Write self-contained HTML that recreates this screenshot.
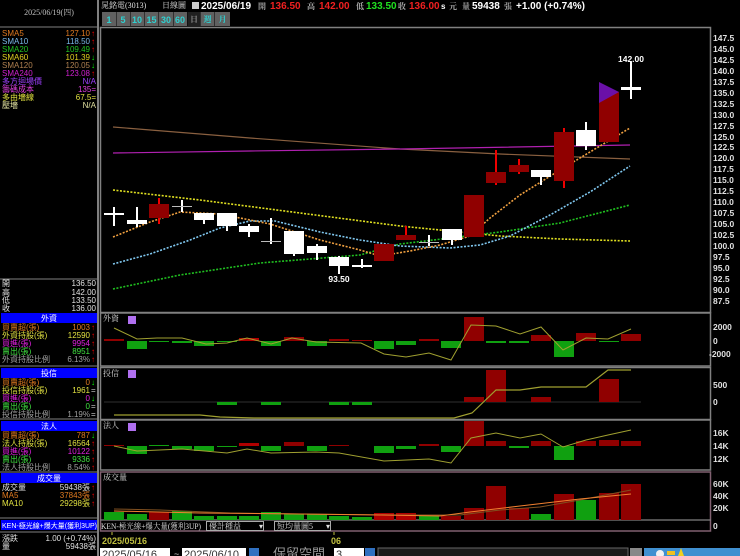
<!DOCTYPE html>
<html><head><meta charset="utf-8">
<style>
html,body{margin:0;padding:0;background:#000;width:740px;height:556px;overflow:hidden}
svg{display:block}
text{font-family:"Liberation Sans","Noto Sans CJK TC",sans-serif}
.s{font-family:"Liberation Serif","Noto Serif CJK SC",serif;font-size:8px}
.ax{font-size:8.5px;fill:#e0e0e0;font-weight:bold}
</style></head><body>
<svg width="740" height="556" viewBox="0 0 740 556" xmlns="http://www.w3.org/2000/svg">
<rect width="740" height="556" fill="#000"/>
<!-- left panel -->
<line x1="98" y1="0" x2="98" y2="556" stroke="#808080" stroke-width="2"/>
<text x="49" y="15" class="s" fill="#c0c0c0" text-anchor="middle">2025/06/19(四)</text>
<line x1="0" y1="27" x2="97" y2="27" stroke="#808080"/>
<g class="s">
<text x="2" y="36" fill="#e07a20">SMA5</text><text x="90" y="36" fill="#e07a20" text-anchor="end">127.10</text><text x="91" y="36" fill="#f00">↑</text>
<text x="2" y="44" fill="#7ab8e8">SMA10</text><text x="90" y="44" fill="#7ab8e8" text-anchor="end">118.50</text><text x="91" y="44" fill="#f00">↑</text>
<text x="2" y="52" fill="#20c020">SMA20</text><text x="90" y="52" fill="#20c020" text-anchor="end">109.49</text><text x="91" y="52" fill="#f00">↑</text>
<text x="2" y="60" fill="#e0d020">SMA60</text><text x="90" y="60" fill="#e0d020" text-anchor="end">101.39</text><text x="91" y="60" fill="#0f0">↓</text>
<text x="2" y="68" fill="#b08050">SMA120</text><text x="90" y="68" fill="#b08050" text-anchor="end">120.05</text><text x="91" y="68" fill="#0f0">↓</text>
<text x="2" y="76" fill="#d020d0">SMA240</text><text x="90" y="76" fill="#d020d0" text-anchor="end">123.08</text><text x="91" y="76" fill="#f00">↑</text>
<text x="2" y="84" fill="#a040ff">多方迴場價</text><text x="96" y="84" fill="#a040ff" text-anchor="end">N/A</text>
<text x="2" y="92" fill="#e040e0">籌碼成本</text><text x="96" y="92" fill="#e040e0" text-anchor="end">135=</text>
<text x="2" y="100" fill="#e0e040">多由墻線</text><text x="96" y="100" fill="#e0e040" text-anchor="end">67.5=</text>
<text x="2" y="108" fill="#e0e0a0">壓墻</text><text x="96" y="108" fill="#e0e0a0" text-anchor="end">N/A</text>
</g>
<line x1="0" y1="279" x2="97" y2="279" stroke="#808080"/>
<g class="s" fill="#e0e0e0">
<text x="2" y="286">開</text><text x="96" y="286" text-anchor="end">136.50</text>
<text x="2" y="295">高</text><text x="96" y="295" text-anchor="end">142.00</text>
<text x="2" y="303">低</text><text x="96" y="303" text-anchor="end">133.50</text>
<text x="2" y="311">收</text><text x="96" y="311" text-anchor="end">136.00</text>
</g>
<g class="s">
<rect x="1" y="313" width="96" height="10" fill="#0000ff"/><text x="49" y="321" fill="#fff" text-anchor="middle">外資</text>
<text x="2" y="330" fill="#e07a20">買賣超(張)</text><text x="90" y="330" fill="#e07a20" text-anchor="end">1003</text><text x="91" y="330" fill="#f00">↑</text>
<text x="2" y="338" fill="#e0e040">外資持股(張)</text><text x="90" y="338" fill="#e0e040" text-anchor="end">12590</text><text x="91" y="338" fill="#f00">↑</text>
<text x="2" y="346" fill="#e020e0">買進(張)</text><text x="90" y="346" fill="#e020e0" text-anchor="end">9954</text><text x="91" y="346" fill="#f00">↑</text>
<text x="2" y="354" fill="#40e040">賣出(張)</text><text x="90" y="354" fill="#40e040" text-anchor="end">8951</text><text x="91" y="354" fill="#f00">↑</text>
<text x="2" y="362" fill="#a0a0a0">外資持股比例</text><text x="90" y="362" fill="#a0a0a0" text-anchor="end">6.13%</text><text x="91" y="362" fill="#f00">↑</text>
<line x1="0" y1="366" x2="97" y2="366" stroke="#808080"/>
<rect x="1" y="368" width="96" height="10" fill="#0000ff"/><text x="49" y="376" fill="#fff" text-anchor="middle">投信</text>
<text x="2" y="385" fill="#e07a20">買賣超(張)</text><text x="90" y="385" fill="#e07a20" text-anchor="end">0</text><text x="91" y="385" fill="#0f0">↓</text>
<text x="2" y="393" fill="#e0e040">投信持股(張)</text><text x="90" y="393" fill="#e0e040" text-anchor="end">1961</text><text x="91" y="393" fill="#ccc">=</text>
<text x="2" y="401" fill="#e020e0">買進(張)</text><text x="90" y="401" fill="#e020e0" text-anchor="end">0</text><text x="91" y="401" fill="#0f0">↓</text>
<text x="2" y="409" fill="#40e040">賣出(張)</text><text x="90" y="409" fill="#40e040" text-anchor="end">0</text><text x="91" y="409" fill="#ccc">=</text>
<text x="2" y="417" fill="#a0a0a0">投信持股比例</text><text x="90" y="417" fill="#a0a0a0" text-anchor="end">1.19%</text><text x="91" y="417" fill="#ccc">=</text>
<line x1="0" y1="419" x2="97" y2="419" stroke="#808080"/>
<rect x="1" y="421" width="96" height="10" fill="#0000ff"/><text x="49" y="429" fill="#fff" text-anchor="middle">法人</text>
<text x="2" y="438" fill="#e07a20">買賣超(張)</text><text x="90" y="438" fill="#e07a20" text-anchor="end">787</text><text x="91" y="438" fill="#0f0">↓</text>
<text x="2" y="446" fill="#e0e040">法人持股(張)</text><text x="90" y="446" fill="#e0e040" text-anchor="end">16564</text><text x="91" y="446" fill="#f00">↑</text>
<text x="2" y="454" fill="#e020e0">買進(張)</text><text x="90" y="454" fill="#e020e0" text-anchor="end">10122</text><text x="91" y="454" fill="#f00">↑</text>
<text x="2" y="462" fill="#40e040">賣出(張)</text><text x="90" y="462" fill="#40e040" text-anchor="end">9336</text><text x="91" y="462" fill="#f00">↑</text>
<text x="2" y="470" fill="#a0a0a0">法人持股比例</text><text x="90" y="470" fill="#a0a0a0" text-anchor="end">8.54%</text><text x="91" y="470" fill="#f00">↑</text>
<line x1="0" y1="472" x2="97" y2="472" stroke="#808080"/>
<rect x="1" y="473" width="96" height="10" fill="#0000ff"/><text x="49" y="481" fill="#fff" text-anchor="middle">成交量</text>
<text x="2" y="490" fill="#e0e0e0">成交量</text><text x="90" y="490" fill="#e0e0e0" text-anchor="end">59438張</text><text x="91" y="490" fill="#f00">↑</text>
<text x="2" y="498" fill="#e07a20">MA5</text><text x="90" y="498" fill="#e07a20" text-anchor="end">37843張</text><text x="91" y="498" fill="#f00">↑</text>
<text x="2" y="506" fill="#e0e040">MA10</text><text x="90" y="506" fill="#e0e040" text-anchor="end">29298張</text><text x="91" y="506" fill="#f00">↑</text>
<line x1="0" y1="518" x2="97" y2="518" stroke="#808080"/>
<rect x="1" y="520" width="96" height="10" fill="#0000ff"/><text x="2" y="528" fill="#fff" font-size="7" textLength="95" lengthAdjust="spacingAndGlyphs">KEN-極光線+爆大量(獲利3UP)</text>
<line x1="0" y1="532" x2="97" y2="532" stroke="#808080"/>
<text x="2" y="541" fill="#e0e0e0">漲跌</text><text x="96" y="541" fill="#e0e0e0" text-anchor="end">1.00 (+0.74%)</text>
<text x="2" y="549" fill="#e0e0e0">量</text><text x="96" y="549" fill="#e0e0e0" text-anchor="end">59438張</text>
</g>

<!-- header -->
<text x="101" y="8" class="s" fill="#e0e0e0">晁銘電(3013)</text>
<text x="162" y="8" class="s" fill="#e0e0e0">日線圖</text>
<rect x="192" y="2" width="7" height="7" fill="#ccc"/>
<g font-size="10" font-weight="bold">
<text x="201" y="9" fill="#fff">2025/06/19</text>
<text x="258" y="9" class="s" fill="#aaa">開</text><text x="270" y="9" fill="#f02020">136.50</text>
<text x="307" y="9" class="s" fill="#aaa">高</text><text x="319" y="9" fill="#f02020">142.00</text>
<text x="356" y="9" class="s" fill="#aaa">低</text><text x="366" y="9" fill="#20e020">133.50</text>
<text x="398" y="9" class="s" fill="#aaa">收</text><text x="409" y="9" fill="#f02020">136.00</text>
<text x="441" y="9" fill="#fff" font-size="8">s</text><text x="449" y="9" class="s" fill="#aaa">元</text>
<text x="462" y="9" class="s" fill="#aaa">量</text><text x="472" y="9" fill="#fff">59438</text><text x="504" y="9" class="s" fill="#aaa">張</text>
<text x="516" y="9" fill="#fff">+1.00 (+0.74%)</text>
</g>
<g font-size="9" font-weight="bold" fill="#30d0d0">
<rect x="102" y="12" width="14" height="14" fill="#606060"/><text x="109" y="23" text-anchor="middle">1</text>
<rect x="116.5" y="12" width="13.5" height="14" fill="#606060"/><text x="123" y="23" text-anchor="middle">5</text>
<rect x="130.5" y="12" width="13.5" height="14" fill="#606060"/><text x="137" y="23" text-anchor="middle">10</text>
<rect x="144.5" y="12" width="14" height="14" fill="#606060"/><text x="151.5" y="23" text-anchor="middle">15</text>
<rect x="159" y="12" width="14" height="14" fill="#606060"/><text x="166" y="23" text-anchor="middle">30</text>
<rect x="173.5" y="12" width="13.5" height="14" fill="#606060"/><text x="180" y="23" text-anchor="middle">60</text>
<rect x="187.5" y="12" width="12.5" height="14" fill="#202020"/><text x="194" y="22" text-anchor="middle" class="s" fill="#888">日</text>
<rect x="200.5" y="12" width="14" height="14" fill="#606060"/><text x="207.5" y="22" text-anchor="middle" class="s">週</text>
<rect x="215" y="12" width="15" height="14" fill="#606060"/><text x="222.5" y="22" text-anchor="middle" class="s">月</text>
</g>

<!-- panel borders -->
<g fill="none" stroke="#808080" stroke-width="1.5">
<rect x="100.5" y="27.5" width="610" height="285"/>
<rect x="100.5" y="313" width="610" height="53"/>
<rect x="100.5" y="367.5" width="610" height="52"/>
<rect x="100.5" y="420" width="610" height="50"/>
</g>
<rect x="100.5" y="472" width="610" height="59" fill="none" stroke="#806070" stroke-width="1.5"/>
<line x1="100" y1="520" x2="711" y2="520" stroke="#808080" stroke-width="1.2"/>

<!-- price axis -->
<g class="ax">
<text x="713" y="41">147.5</text><text x="713" y="52">145.0</text><text x="713" y="63">142.5</text><text x="713" y="74">140.0</text>
<text x="713" y="85">137.5</text><text x="713" y="96">135.0</text><text x="713" y="107">132.5</text><text x="713" y="118">130.0</text>
<text x="713" y="129">127.5</text><text x="713" y="140">125.0</text><text x="713" y="150">122.5</text><text x="713" y="161">120.0</text>
<text x="713" y="172">117.5</text><text x="713" y="183">115.0</text><text x="713" y="194">112.5</text><text x="713" y="205">110.0</text>
<text x="713" y="216">107.5</text><text x="713" y="227">105.0</text><text x="713" y="238">102.5</text><text x="713" y="249">100.0</text>
<text x="713" y="260">97.5</text><text x="713" y="271">95.0</text><text x="713" y="282">92.5</text><text x="713" y="293">90.0</text>
<text x="713" y="304">87.5</text>
<text x="713" y="330">2000</text><text x="713" y="344">0</text><text x="709" y="357">-2000</text>
<text x="713" y="388">500</text><text x="713" y="405">0</text>
<text x="713" y="436">16K</text><text x="713" y="449">14K</text><text x="713" y="462">12K</text>
<text x="713" y="487">60K</text><text x="713" y="499">40K</text><text x="713" y="511">20K</text><text x="713" y="529">0</text>
</g>

<!-- MAs -->
<polyline points="113,127 250,138 400,149 500,154 630,159" fill="none" stroke="#8a6040" stroke-width="1.2"/>
<polyline points="113,153 250,151 400,149 630,145" fill="none" stroke="#b020b0" stroke-width="1.2"/>
<polyline points="113,190 200,200 300,213 400,226 500,236 560,239 630,241" fill="none" stroke="#e0e020" stroke-width="1.6" stroke-dasharray="2,1.5"/>
<polyline points="113,289 180,275 260,263 360,255 400,244 450,238 500,232 560,223 630,205" fill="none" stroke="#20c020" stroke-width="1.6" stroke-dasharray="2,1.5"/>
<polyline points="113,264 150,254 190,240 220,228 250,221 275,221 320,232 360,240 400,246 450,248 480,245 510,236 550,215 590,192 630,166" fill="none" stroke="#80c8f0" stroke-width="1.6" stroke-dasharray="2,1.5"/>
<polyline points="113,237 150,222 180,212 220,214 270,224 320,240 360,250 380,256 410,251 440,245 470,236 490,218 520,195 560,170 600,146 630,128" fill="none" stroke="#f0a040" stroke-width="1.6" stroke-dasharray="2,1.5"/>

<!-- candles -->
<g stroke-width="2">
<line x1="114" y1="207" x2="114" y2="226" stroke="#fff"/><rect x="104" y="213" width="20" height="2" fill="#fff"/>
<line x1="137" y1="207" x2="137" y2="227" stroke="#fff"/><rect x="127" y="220" width="20" height="4" fill="#fff"/>
<line x1="159" y1="198" x2="159" y2="224" stroke="#f00000"/><rect x="149" y="204" width="20" height="14" fill="#900000"/>
<line x1="182" y1="200" x2="182" y2="212" stroke="#fff"/><rect x="172" y="206" width="20" height="1" fill="#bbb"/>
<line x1="204" y1="213" x2="204" y2="224" stroke="#fff"/><rect x="194" y="213" width="20" height="7" fill="#fff"/>
<line x1="227" y1="213" x2="227" y2="231" stroke="#fff"/><rect x="217" y="213" width="20" height="13" fill="#fff"/>
<line x1="249" y1="224" x2="249" y2="237" stroke="#fff"/><rect x="239" y="226" width="20" height="6" fill="#fff"/>
<line x1="271" y1="218" x2="271" y2="244" stroke="#fff"/><rect x="261" y="241" width="20" height="1" fill="#bbb"/>
<line x1="294" y1="231" x2="294" y2="256" stroke="#fff"/><rect x="284" y="231" width="20" height="23" fill="#fff"/>
<line x1="317" y1="244" x2="317" y2="260" stroke="#fff"/><rect x="307" y="246" width="20" height="7" fill="#fff"/>
<line x1="339" y1="256" x2="339" y2="274" stroke="#fff"/><rect x="329" y="257" width="20" height="9" fill="#fff"/>
<line x1="362" y1="259" x2="362" y2="268" stroke="#fff"/><rect x="352" y="265" width="20" height="2" fill="#fff"/>
<rect x="374" y="244" width="20" height="17" fill="#900000"/>
<line x1="406" y1="226" x2="406" y2="240" stroke="#f00000"/><rect x="396" y="235" width="20" height="5" fill="#900000"/>
<line x1="429" y1="235" x2="429" y2="246" stroke="#fff"/><rect x="419" y="242" width="20" height="1" fill="#bbb"/>
<line x1="452" y1="229" x2="452" y2="245" stroke="#fff"/><rect x="442" y="229" width="20" height="11" fill="#fff"/>
<rect x="464" y="195" width="20" height="42" fill="#900000"/>
<line x1="496" y1="150" x2="496" y2="185" stroke="#f00000"/><rect x="486" y="172" width="20" height="11" fill="#900000"/>
<line x1="519" y1="159" x2="519" y2="174" stroke="#f00000"/><rect x="509" y="165" width="20" height="7" fill="#900000"/>
<line x1="541" y1="170" x2="541" y2="185" stroke="#fff"/><rect x="531" y="170" width="20" height="7" fill="#fff"/>
<line x1="564" y1="128" x2="564" y2="188" stroke="#f00000"/><rect x="554" y="132" width="20" height="49" fill="#900000"/>
<line x1="586" y1="122" x2="586" y2="150" stroke="#fff"/><rect x="576" y="130" width="20" height="16" fill="#fff"/>
<rect x="599" y="92" width="20" height="50" fill="#900000"/>
<polygon points="599,82 619,92 599,103" fill="#6a10a8"/>
<line x1="631" y1="62" x2="631" y2="99" stroke="#fff"/><rect x="621" y="87" width="20" height="3" fill="#fff"/>
</g>
<text x="631" y="62" text-anchor="middle" font-size="8.5" fill="#fff" font-weight="bold">142.00</text>
<text x="339" y="282" text-anchor="middle" font-size="8.5" fill="#fff" font-weight="bold">93.50</text>

<!-- 外資 panel -->
<text x="103" y="321" class="s" fill="#ddd">外資</text>
<rect x="128" y="316" width="8" height="8" fill="#b070f0"/>
<g>
<rect x="104" y="339" width="20" height="2" fill="#900000"/>
<rect x="127" y="341" width="20" height="8" fill="#10a010"/>
<rect x="149" y="341" width="20" height="1" fill="#10a010"/>
<rect x="172" y="341" width="20" height="2" fill="#10a010"/>
<rect x="194" y="341" width="20" height="5" fill="#10a010"/>
<rect x="217" y="341" width="20" height="1" fill="#10a010"/>
<rect x="239" y="338" width="20" height="3" fill="#b00000"/>
<rect x="261" y="341" width="20" height="5" fill="#10a010"/>
<rect x="284" y="337" width="20" height="4" fill="#900000"/>
<rect x="307" y="341" width="20" height="5" fill="#10a010"/>
<rect x="329" y="339" width="20" height="2" fill="#900000"/>
<rect x="352" y="340" width="20" height="1" fill="#900000"/>
<rect x="374" y="341" width="20" height="8" fill="#10a010"/>
<rect x="396" y="341" width="20" height="4" fill="#10a010"/>
<rect x="419" y="339" width="20" height="2" fill="#900000"/>
<rect x="441" y="341" width="20" height="7" fill="#10a010"/>
<rect x="464" y="317" width="20" height="24" fill="#900000"/>
<rect x="486" y="341" width="20" height="2" fill="#10a010"/>
<rect x="509" y="341" width="20" height="2" fill="#10a010"/>
<rect x="531" y="335" width="20" height="6" fill="#900000"/>
<rect x="554" y="341" width="20" height="16" fill="#10a010"/>
<rect x="576" y="333" width="20" height="8" fill="#900000"/>
<rect x="599" y="341" width="20" height="1" fill="#10a010"/>
<rect x="621" y="334" width="20" height="7" fill="#900000"/>
</g>
<polyline points="114,328 137,339 157,338 182,338 206,344 227,343 247,338 271,344 292,338 316,342 361,343 384,354 406,357 429,353 451,360 471,325 496,326 520,334 541,327 563,350 586,338 608,339 631,329" fill="none" stroke="#a0a030" stroke-width="1"/>

<!-- 投信 panel -->
<text x="103" y="376" class="s" fill="#ddd">投信</text>
<rect x="128" y="370" width="8" height="8" fill="#b070f0"/>
<line x1="104" y1="402" x2="641" y2="402" stroke="#303030"/>
<g>
<rect x="217" y="402" width="20" height="3" fill="#10a010"/>
<rect x="261" y="402" width="20" height="3" fill="#10a010"/>
<rect x="329" y="402" width="20" height="3" fill="#10a010"/>
<rect x="352" y="402" width="20" height="3" fill="#10a010"/>
<rect x="464" y="397" width="20" height="5" fill="#900000"/>
<rect x="486" y="370" width="20" height="32" fill="#900000"/>
<rect x="531" y="397" width="20" height="5" fill="#900000"/>
<rect x="599" y="379" width="20" height="23" fill="#900000"/>
</g>
<polyline points="114,415 200,415 220,417 254,418 454,418 472,413 496,390 520,390 541,387 586,387 608,370 631,370" fill="none" stroke="#a0a030" stroke-width="1.2"/>

<!-- 法人 panel -->
<text x="103" y="428" class="s" fill="#ddd">法人</text>
<rect x="128" y="423" width="8" height="8" fill="#b070f0"/>
<g>
<rect x="104" y="445" width="20" height="1" fill="#900000"/>
<rect x="127" y="446" width="20" height="8" fill="#10a010"/>
<rect x="149" y="445" width="20" height="1" fill="#10a010"/>
<rect x="172" y="446" width="20" height="3" fill="#10a010"/>
<rect x="194" y="446" width="20" height="5" fill="#10a010"/>
<rect x="217" y="446" width="20" height="1" fill="#10a010"/>
<rect x="239" y="443" width="20" height="3" fill="#b00000"/>
<rect x="261" y="446" width="20" height="5" fill="#10a010"/>
<rect x="284" y="442" width="20" height="4" fill="#900000"/>
<rect x="307" y="446" width="20" height="5" fill="#10a010"/>
<rect x="329" y="445" width="20" height="1" fill="#900000"/>
<rect x="374" y="446" width="20" height="7" fill="#10a010"/>
<rect x="396" y="446" width="20" height="3" fill="#10a010"/>
<rect x="419" y="444" width="20" height="2" fill="#900000"/>
<rect x="441" y="446" width="20" height="6" fill="#10a010"/>
<rect x="464" y="421" width="20" height="25" fill="#900000"/>
<rect x="486" y="441" width="20" height="5" fill="#900000"/>
<rect x="509" y="446" width="20" height="2" fill="#10a010"/>
<rect x="531" y="441" width="20" height="5" fill="#900000"/>
<rect x="554" y="446" width="20" height="14" fill="#10a010"/>
<rect x="576" y="441" width="20" height="5" fill="#900000"/>
<rect x="599" y="440" width="20" height="6" fill="#900000"/>
<rect x="621" y="441" width="20" height="5" fill="#900000"/>
</g>
<polyline points="114,446 137,451 182,449 227,453 247,449 271,453 316,452 339,453 384,461 429,459 451,463 471,438 496,433 520,438 541,434 563,447 586,440 608,435 631,430" fill="none" stroke="#a0a030" stroke-width="1"/>

<!-- volume panel -->
<text x="103" y="480" class="s" fill="#ddd">成交量</text>
<g>
<rect x="104" y="512" width="20" height="8" fill="#10a010"/>
<rect x="127" y="514" width="20" height="6" fill="#10a010"/>
<rect x="149" y="512" width="20" height="8" fill="#900000"/>
<rect x="172" y="511" width="20" height="9" fill="#10a010"/>
<rect x="194" y="516" width="20" height="4" fill="#10a010"/>
<rect x="217" y="516" width="20" height="4" fill="#10a010"/>
<rect x="239" y="516" width="20" height="4" fill="#10a010"/>
<rect x="261" y="512" width="20" height="8" fill="#10a010"/>
<rect x="284" y="514" width="20" height="6" fill="#10a010"/>
<rect x="307" y="514" width="20" height="6" fill="#10a010"/>
<rect x="329" y="516" width="20" height="4" fill="#10a010"/>
<rect x="352" y="517" width="20" height="3" fill="#10a010"/>
<rect x="374" y="513" width="20" height="7" fill="#b00000"/>
<rect x="396" y="513" width="20" height="7" fill="#b00000"/>
<rect x="419" y="515" width="20" height="5" fill="#10a010"/>
<rect x="441" y="516" width="20" height="4" fill="#900000"/>
<rect x="464" y="508" width="20" height="12" fill="#900000"/>
<rect x="486" y="486" width="20" height="34" fill="#900000"/>
<rect x="509" y="508" width="20" height="12" fill="#900000"/>
<rect x="531" y="514" width="20" height="6" fill="#10a010"/>
<rect x="554" y="494" width="20" height="26" fill="#900000"/>
<rect x="576" y="500" width="20" height="20" fill="#10a010"/>
<rect x="599" y="493" width="20" height="27" fill="#900000"/>
<rect x="621" y="484" width="20" height="36" fill="#900000"/>
</g>
<polyline points="114,509 160,510 230,513 300,514 400,515 460,515 500,510 540,507 580,500 631,490" fill="none" stroke="#805020" stroke-width="1"/>
<polyline points="114,511 200,513 300,514 380,515 440,516 470,512 520,506 580,499 631,494" fill="none" stroke="#f08030" stroke-width="1"/>

<!-- KEN row -->
<text x="101" y="529" class="s" fill="#ddd" font-size="7" textLength="100" lengthAdjust="spacingAndGlyphs">KEN-極光線+爆大量(獲利3UP)</text>
<rect x="206.5" y="521.5" width="57" height="9" fill="#000" stroke="#aaa"/>
<text x="209" y="529" class="s" fill="#ddd">優計種益</text><text x="259" y="529" class="s" fill="#ddd">▾</text>
<rect x="274.5" y="521.5" width="56" height="9" fill="#000" stroke="#aaa"/>
<text x="277" y="529" class="s" fill="#ddd">短均量圖5</text><text x="326" y="529" class="s" fill="#ddd">▾</text>

<!-- date axis -->
<line x1="112" y1="532" x2="112" y2="535" stroke="#c0c040"/>
<line x1="334" y1="532" x2="334" y2="535" stroke="#c0c040"/>
<text x="102" y="544" font-size="9" fill="#c0c040" font-weight="bold">2025/05/16</text>
<text x="331" y="544" font-size="9" fill="#c0c040" font-weight="bold">06</text>

<!-- bottom controls -->
<rect x="100" y="548" width="70" height="10" fill="#fff"/>
<text x="102" y="558" font-size="11" fill="#333">2025/05/16</text>
<text x="174" y="557" font-size="9" fill="#ccc">~</text>
<rect x="182" y="548" width="64" height="10" fill="#fff"/>
<text x="184" y="558" font-size="11" fill="#333">2025/06/10</text>
<rect x="249" y="548" width="10" height="10" fill="#3070c0"/>
<text x="273" y="558" font-size="13" fill="#999">保留空間</text>
<rect x="334" y="548" width="30" height="10" fill="#fff"/>
<text x="336" y="558" font-size="11" fill="#333">3</text>
<rect x="365" y="548" width="10" height="10" fill="#3070c0"/>
<rect x="378" y="548" width="250" height="10" fill="#1a1a1a" stroke="#666"/>
<rect x="630" y="548" width="12" height="10" fill="#888"/>
<rect x="644" y="548" width="96" height="10" fill="#4090d0"/>
<circle cx="660" cy="554" r="4" fill="#f0f0f0"/>
<rect x="667" y="551" width="8" height="4" fill="#f0c020"/>
<polygon points="681,548 684,556 678,556" fill="#f0d020"/>
</svg>
</body></html>
